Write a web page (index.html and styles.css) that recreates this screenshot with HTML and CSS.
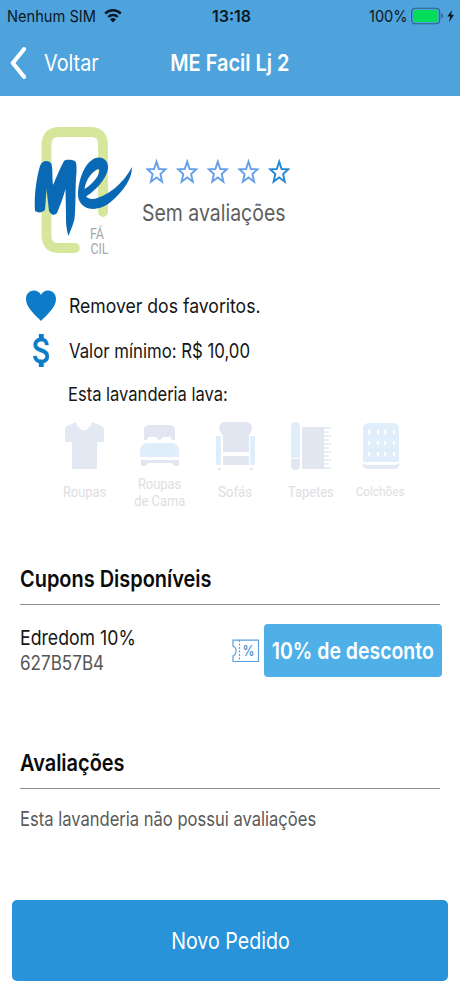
FILE: index.html
```html
<!DOCTYPE html>
<html lang="pt-BR">
<head>
<meta charset="utf-8">
<title>ME Facil Lj 2</title>
<link rel="stylesheet" href="styles.css">
</head>
<body>
<header class="header">
  <div class="status">
    <div class="carrier">
      <span class="t t-carrier">Nenhum SIM</span>
      <svg class="wifi" viewBox="0 0 18 15" width="18" height="15"><g fill="none" stroke="#0a1722"><path stroke-width="2.5" d="M1.2 5.6a11 11 0 0 1 15.6 0"/><path stroke-width="2.4" d="M4.2 9a6.8 6.8 0 0 1 9.6 0"/></g><path fill="#0a1722" d="M9 14.5l-3-3a4.3 4.3 0 0 1 6 0z"/></svg>
    </div>
    <span class="t t-clock">13:18</span>
    <div class="power">
      <span class="t t-power">100%</span>
      <svg class="battery" viewBox="0 0 44 18" width="44" height="18"><rect x=".7" y="1.2" width="28" height="15.6" rx="3.5" fill="none" stroke="#2b6189" stroke-width="1.1"/><rect x="2.3" y="3" width="24.8" height="12" rx="1.8" fill="#04dd57"/><path d="M30.3 6.3q1.7.8 1.7 2.7t-1.7 2.7z" fill="#2b6189"/><path d="M41.3 2.8L36.3 9.6h3l-1.3 5.6 5-7.4h-3z" fill="#0a1722"/></svg>
    </div>
  </div>
  <nav class="nav">
    <a class="back"><svg viewBox="0 0 16 32" width="16" height="32"><path d="M14 2.2L2.8 16l11.2 13.8" fill="none" stroke="#fff" stroke-width="4.2" stroke-linecap="round" stroke-linejoin="round"/></svg><span class="t t-back">Voltar</span></a>
    <h1 class="title"><span class="t t-title">ME Facil Lj 2</span></h1>
  </nav>
</header>

<main>
  <section class="store">
    <svg class="logo" viewBox="32 123 102 134" width="102" height="134">
      <path d="M103 212V145Q103 132 91 132H59Q46.5 132 46.5 145V235Q46.5 248 58 248H75" fill="none" stroke="#d6e69b" stroke-width="9.8" stroke-linecap="round"/>
      <path d="M35 211C34 196 36 180 40 166C42 160 48 160 51 163C53 167 52 176 53 185C57 176 60 168 64 161C67 159 72 160 75 161C77 163 76.5 168 76.5 172C75 188 76 206 74.5 219C73 225 71 229 68.500 236C66 229 66 222 66 216L65.500 189C63 198 60 206 57 213C54 216 51 215 49 211L46.500 189L45 210C42 213 38 213 35 211Z" fill="#0969b5"/>
      <path fill-rule="evenodd" d="M78 192C79 178 85 164 92 160C99 155 107 158 108 166C109 175 98 189 86 196.5C92 203 106 195 115 188C122 182 127 176 132 167C132 179 124 190 113 200C101 211 86 212 80 202C78 199 78 196 78 192ZM84.5 189C93 184 101 174 99 169C93 170 86 179 84.5 189Z" fill="#0969b5"/>
      <g font-family="Roboto, sans-serif" font-size="14.5" fill="#a3a7ad"><text x="90" y="238.5" textLength="14" lengthAdjust="spacingAndGlyphs">FÁ</text><text x="90.5" y="254" textLength="18" lengthAdjust="spacingAndGlyphs">CIL</text></g>
    </svg>
    <div class="rating">
      <svg class="stars" viewBox="0 0 146 28" width="146" height="28">
        <defs><path id="star" d="M11.5 3.6L13.9 11L20.5 11.3L15.4 16L17.1 23.7L11.5 19.5L5.9 23.7L7.6 16L2.5 11.3L9.1 11Z" fill="none" stroke-width="1.9"/></defs>
        <g stroke="#659fe8"><use href="#star"/><use href="#star" x="30.7"/><use href="#star" x="61.3"/><use href="#star" x="92"/></g><use href="#star" x="122.7" stroke="#2389d3"/>
      </svg>
      <p class="t t-rating">Sem avaliações</p>
    </div>
  </section>

  <section class="info">
    <div class="row fav"><svg viewBox="0 0 30 31" width="30" height="31"><path d="M15 31C9 24.8 0 17.5 0 9C0 4 3.4.5 8 .5C11 .5 13.7 2.2 15 5C16.3 2.2 19 .5 22 .5C26.6 .5 30 4 30 9C30 17.5 21 24.8 15 31Z" fill="#0c7cc8"/></svg><span class="t t-fav">Remover dos favoritos.</span></div>
    <div class="row min"><svg viewBox="6.1 3 10.4 18" width="16" height="33" preserveAspectRatio="none"><path fill="#0c7cc8" stroke="#0c7cc8" stroke-width=".2" d="M11.8 10.9c-2.27-.59-3-1.2-3-2.15 0-1.09 1.01-1.85 2.7-1.85 1.78 0 2.44.85 2.5 2.1h2.21c-.07-1.72-1.12-3.3-3.21-3.81V3h-3v2.16c-1.94.42-3.5 1.68-3.5 3.61 0 2.31 1.91 3.46 4.7 4.13 2.5.6 3 1.48 3 2.41 0 .69-.49 1.79-2.7 1.79-2.06 0-2.87-.92-2.98-2.1h-2.2c.12 2.19 1.76 3.42 3.68 3.83V21h3v-2.15c1.95-.37 3.5-1.5 3.5-3.55 0-2.84-2.43-3.81-4.7-4.4z"/></svg><span class="t t-min">Valor mínimo: R$ 10,00</span></div>
    <div class="row washes"><span class="t t-washes">Esta lavanderia lava:</span></div>
  </section>

  <ul class="services">
    <li><svg viewBox="0 0 42 50" width="42" height="50"><path fill="#e2e9f3" d="M12 1C15 12 25 12 28 1L38 5Q40 6 40 9V21H33V48H8V21H1V9Q1 6 3 5Z"/></svg><span class="t label single">Roupas</span></li>
    <li><svg viewBox="0 0 42 50" width="42" height="50"><path fill="#e2e6f0" d="M5 19V9Q5 4 11 4H30Q36 4 36 9V19H33Q32 15 28 16Q23 15 22 19H19Q18 15 13 16Q9 15 8 19ZM2 39H40V45H35L33 42H9L7 45H2Z"/><path fill="#e0eefb" d="M7 22H34Q40 24 40 30V36H1V30Q1 24 7 22Z"/></svg><span class="t label">Roupas</span><span class="t label">de Cama</span></li>
    <li><svg viewBox="0 0 42 50" width="42" height="50"><path fill="#e2e6f0" d="M9 1H32Q37 2 37 8L34 15V31H8V15L4 8Q4 2 9 1ZM8 35H34V44H8ZM3 47H6V49H3ZM35 47H38V49H35Z"/><path fill="#e0eefb" d="M1 15H6V44H1ZM35 15H40V44H35Z"/></svg><span class="t label single sofa">Sofás</span></li>
    <li><svg viewBox="0 0 42 50" width="42" height="50"><path fill="#e0eefb" d="M1 6Q1 1 5.5 1T10 6V37H1Z"/><path fill="#e2e6f0" d="M1 38H10V44Q10 49 5.5 49T1 44ZM12 6H34V48H12Z"/><path stroke="#e2e9f3" stroke-width="1.3" d="M34 7h7M34 11h5M34 15h7M34 19h5M34 23h7M34 27h5M34 31h7M34 35h5M34 39h7M34 43h5M34 47h7"/></svg><span class="t label single rug">Tapetes</span></li>
    <li><svg viewBox="0 0 42 50" width="42" height="50"><path fill="#e0eefb" d="M8 2H34Q39 3 39 8V39Q39 41 36 41H6Q3 41 3 39V8Q3 3 8 2Z"/><path fill="#e2e9f3" d="M2 42Q4 44 8 44H34Q38 44 40 42Q39 48 34 48H8Q3 48 2 42Z"/><path fill="#fff" d="M8 8l3 3-3 3zM16 11l3-3v6zM24 8l3 3-3 3zM32 11l3-3v6zM8 19l3 3-3 3zM16 22l3-3v6zM24 19l3 3-3 3zM32 22l3-3v6zM8 30l3 3-3 3zM16 33l3-3v6zM24 30l3 3-3 3zM32 33l3-3v6z"/></svg><span class="t label single mattress">Colchões</span></li>
  </ul>

  <section class="coupons">
    <h2><span class="t t-coupons">Cupons Disponíveis</span></h2>
    <div class="coupon">
      <div class="coupon-text"><p class="t t-name">Edredom 10%</p><p class="t t-code">627B57B4</p></div>
      <svg class="ticket" viewBox="0 0 28 24" width="28" height="24"><g fill="none" stroke="#5b9fdc" stroke-width="1.2"><path d="M1 7V1.2H26.5V22.5H1V17C5 15.5 5 8.5 1 7Z"/><path stroke-dasharray="2 1.5" d="M7.5 1V22"/></g><text x="10.5" y="17.2" font-family="Inter, sans-serif" font-size="15" font-weight="500" fill="#4489c9" textLength="12" lengthAdjust="spacingAndGlyphs">%</text></svg>
      <button class="discount"><span class="t t-discount">10% de desconto</span></button>
    </div>
  </section>

  <section class="reviews">
    <h2><span class="t t-reviews">Avaliações</span></h2>
    <p class="t t-empty">Esta lavanderia não possui avaliações</p>
  </section>
</main>
<footer><button class="order"><span class="t t-order">Novo Pedido</span></button></footer>
</body>
</html>
```
FILE: styles.css
```css
* { box-sizing: border-box; }
body, h1, h2, p, ul { margin: 0; padding: 0; font-weight: 400; }
body { width: 460px; height: 996px; overflow: hidden; background: #fff; font-family: Inter, "Noto Sans", sans-serif; color: #161616; }
svg { display: block; flex: none; }
button { border: 0; padding: 0; font-family: inherit; color: #fff; display: flex; align-items: center; justify-content: center; }

/* Condensed text: each label sets its own horizontal scale */
.t { display: block; flex: none; white-space: nowrap; transform: scaleX(var(--sx, 1)); transform-origin: left center; }

.header { height: 96px; background: #4fa3dd; }
.status { height: 32px; display: grid; grid-template-columns: 204px 1fr 99px; align-items: center; font-size: 16px; line-height: 32px; color: #0a1722; }
.carrier { display: flex; align-items: center; padding-left: 7px; }
.t-carrier { --sx: .915; width: 97px; }
.t-clock { --sx: 1; width: 39px; margin-left: 8px; font-weight: 600; }
.power { display: flex; align-items: center; padding-left: 8px; }
.t-power { --sx: .91; width: 42px; }
.wifi { margin-top: -2px; }

.nav { height: 62px; display: grid; grid-template-columns: 150px 160px 1fr; align-items: center; color: #fff; font-size: 23px; }
.back { display: flex; align-items: center; gap: 18px; padding-left: 10px; }
.t-back { --sx: .86; }
.title { display: flex; justify-content: center; font-size: 23px; }
.t-title { --sx: .866; transform-origin: center; font-weight: 600; }

.store { height: 188px; padding: 27px 0 0 32px; display: flex; gap: 8px; }
.rating { padding-top: 35px; }
.stars { margin-left: 3px; }
.t-rating { --sx: .846; margin-top: 12px; font-size: 23px; line-height: 31px; color: #5e5e5e; }

.info { display: flex; flex-direction: column; }
.row { height: 44px; display: flex; align-items: center; font-size: 20px; }
.fav { padding-left: 26px; gap: 13px; }
.fav svg { margin-top: -2px; }
.min { height: 45px; padding-left: 33px; gap: 20px; }
.washes { height: 43px; padding-left: 67.5px; font-size: 19px; }
.t-fav { --sx: .88; }
.t-min { --sx: .838; }
.t-washes { --sx: .87; }

.services { height: 130px; padding: 5px 0 0 47.5px; display: grid; grid-template-columns: 75px 75px 76px 75px 64px; list-style: none; }
.services li { display: flex; flex-direction: column; align-items: center; }
.label { --sx: .92; transform-origin: center; font-family: Roboto, sans-serif; font-size: 14px; line-height: 17px; color: #dedee1; }
.services svg { margin-bottom: 5px; }
.single { margin-top: 8px; }
.sofa { --sx: .95; }
.mattress { --sx: .87; font-size: 13.5px; margin-top: 7px; }

h2 { height: 52px; display: flex; align-items: center; border-bottom: 1px solid #8f8f8f; font-size: 23px; color: #0b0b0b; }
.coupons { height: 191px; padding: 7px 20px 0; }
.t-coupons, .t-reviews { --sx: .867; font-weight: 600; }
.coupon { display: flex; align-items: center; width: 421.5px; padding-top: 19px; }
.coupon-text { width: 212px; }
.t-name { --sx: .863; font-size: 20.5px; line-height: 26px; }
.t-code { --sx: .876; font-size: 19.5px; line-height: 25px; color: #555; }
.discount { width: 177.5px; height: 53px; margin-left: auto; border-radius: 4px; background: #4fb0e8; font-size: 23px; }
.t-discount { --sx: .846; transform-origin: center; font-weight: 600; }
.discount .t, .order .t { margin: 0 -20px; }

.reviews { height: 163px; padding: 0 20px; }
.t-empty { --sx: .828; margin-top: 15px; font-size: 20px; line-height: 31px; color: #5a5a5a; }

footer { padding: 0 12px; }
.order { width: 436px; height: 81px; border-radius: 5px; background: #2993d9; font-size: 23px; }
.t-order { --sx: .853; transform-origin: center; }
```
